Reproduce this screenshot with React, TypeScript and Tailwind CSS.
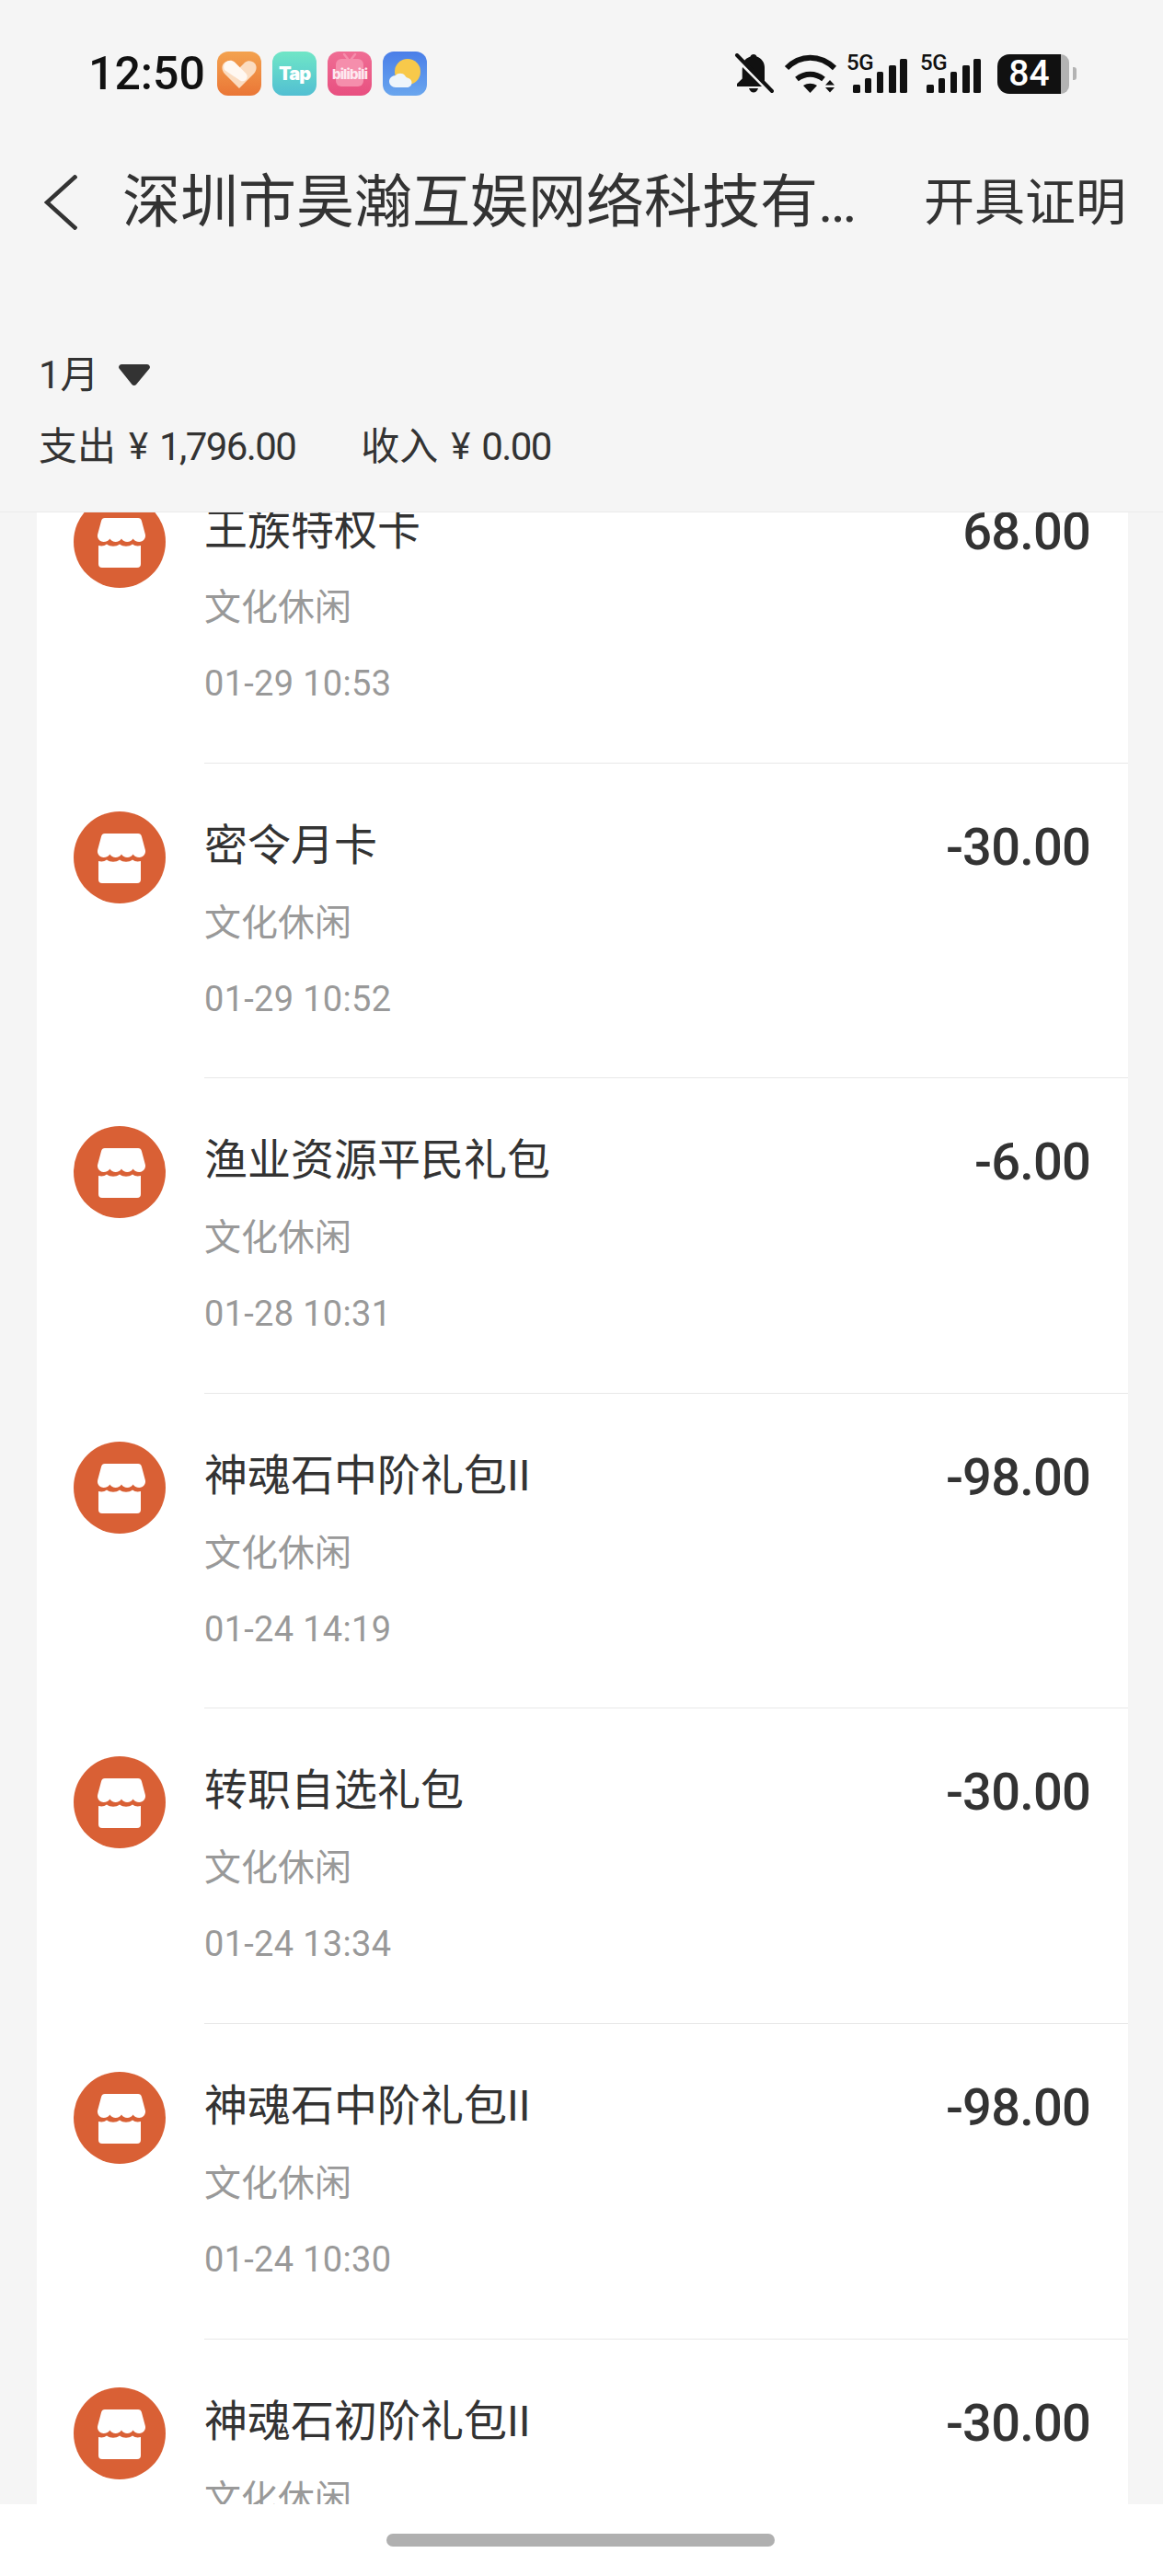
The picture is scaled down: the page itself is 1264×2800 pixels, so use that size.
const font = { cjk: "font-['Roboto','Noto_Sans_CJK_SC',sans-serif]" }

type Bill = { title: string; amount: string; date: string }

const bills: Bill[] = [
  { title: '王族特权卡', amount: '68.00', date: '01-29 10:53' },
  { title: '密令月卡', amount: '-30.00', date: '01-29 10:52' },
  { title: '渔业资源平民礼包', amount: '-6.00', date: '01-28 10:31' },
  { title: '神魂石中阶礼包II', amount: '-98.00', date: '01-24 14:19' },
  { title: '转职自选礼包', amount: '-30.00', date: '01-24 13:34' },
  { title: '神魂石中阶礼包II', amount: '-98.00', date: '01-24 10:30' },
  { title: '神魂石初阶礼包II', amount: '-30.00', date: '01-24 10:28' },
]

function StoreIcon() {
  return (
    <svg viewBox="0 0 100 100" className="h-[100px] w-[100px] shrink-0">
      <circle cx="50" cy="50" r="50" fill="#d96035" />
      <path
        fill="#fff"
        d="M30 24h40a4 4 0 0 1 3.900 3l4 15c.8 4-2.200 8-6.600 8-3 0-5.400-1.500-6.700-3.500-1.300 2-3.600 3.500-6.300 3.500s-5-1.500-6.300-3.500c-1.300 2-3.600 3.500-6.300 3.500s-5-1.500-6.300-3.500c-1.300 2-3.700 3.500-6.700 3.500-4.400 0-7.400-4-6.600-8l4-15a4 4 0 0 1 3.900-3z"
      />
      <path
        fill="#fff"
        d="M27 54c3.500 1 6.500.5 9-1.500 4 3 10 3 14 0 4 3 10 3 14 0 2.500 2 5.500 2.500 9 1.500v20a4 4 0 0 1-4 4H31a4 4 0 0 1-4-4z"
      />
    </svg>
  )
}

function BillRow({ bill, last }: { bill: Bill; last: boolean }) {
  return (
    <div className="flex h-[342.6px] shrink-0 pl-[40px]">
      <div className="pt-[52px]">
        <StoreIcon />
      </div>
      <div className={`ml-[42px] flex flex-1 justify-between pr-[41px] ${last ? '' : 'border-b border-[#e8e8e8]'}`}>
        <div>
          <div className="mt-[59px] text-[47px] leading-[60px] text-[#333333]">{bill.title}</div>
          <div className="mt-[27px] text-[40px] leading-[56px] text-[#999999]">文化休闲</div>
          <div className="mt-[26px] text-[38px] leading-[56px] tracking-[0.3px] text-[#999999]">{bill.date}</div>
        </div>
        <div className="mt-[57px] text-[56px] font-medium leading-[68px] tracking-[-0.8px] text-[#333333]">{bill.amount}</div>
      </div>
    </div>
  )
}

function AppIcons() {
  return (
    <div className="ml-[16px] flex gap-[12px]">
      <div className="h-[48px] w-[48px] overflow-hidden rounded-[12px] bg-gradient-to-b from-[#f3a24f] to-[#ea7636]">
        <svg viewBox="0 0 48 48" className="h-[48px] w-[48px]">
          <path
            fill="#fbdcc0"
            d="M24 40 8 24c-3-3.500-3.500-8-1-11 3-3.500 8-3.500 11-1l6 6 6-6c3-2.500 8-2.500 11 1 2.500 3 2 7.500-1 11z"
          />
          <path fill="#fff8f2" d="M9 12c3-3 7-3 10-.5l12 12c2.500 2.500 2 5.500 0 7.500-2.500 2-5.500 1.500-7.500-.5L8 20c-1.500-2.500-1-6 1-8z" />
        </svg>
      </div>
      <div className="flex h-[48px] w-[48px] items-center justify-center rounded-[12px] bg-gradient-to-b from-[#70e6c6] to-[#52bfd2]">
        <span className="font-['Inter',sans-serif] text-[20px] font-black tracking-[-1px] text-white">Tap</span>
      </div>
      <div className="h-[48px] w-[48px] overflow-hidden rounded-[12px] bg-gradient-to-b from-[#ef6d94] to-[#e84f80]">
        <svg viewBox="0 0 48 48" className="h-[48px] w-[48px]">
          <path d="M18 3l4 5M30 3l-4 5" stroke="#f58eac" strokeWidth="2.500" strokeLinecap="round" />
          <rect x="9" y="8" width="30" height="30" rx="6" fill="#f58eac" />
          <text x="24" y="30" textAnchor="middle" fontSize="15" fontWeight="800" letterSpacing="-0.8" fill="#fde8ef" fontFamily="Inter, sans-serif">
            bilibili
          </text>
        </svg>
      </div>
      <div className="h-[48px] w-[48px] overflow-hidden rounded-[12px] bg-gradient-to-b from-[#4a7ee8] to-[#6aa6ee]">
        <svg viewBox="0 0 48 48" className="h-[48px] w-[48px]">
          <circle cx="27" cy="22" r="14" fill="#f8c94a" />
          <path
            fill="#eef5fb"
            d="M14 39c-4 0-7-3-7-6.500S10 26 14 26c2-3 8-3 10 0 1 1.500 2 2.500 4 3 2 .5 3.500 2.500 3.500 5s-2 5-5 5z"
          />
        </svg>
      </div>
    </div>
  )
}

function SignalIcon() {
  return (
    <svg viewBox="0 0 66 44" className="h-[44px] w-[66px]" fill="#111111">
      <text x="0" y="18" fontSize="24" fontWeight="500" letterSpacing="-0.5" fontFamily="Roboto, sans-serif">5G</text>
      <rect x="7" y="34" width="8" height="9" rx="1.500" />
      <rect x="20" y="27" width="7" height="16" rx="1.500" />
      <rect x="33" y="20" width="7" height="23" rx="1.500" />
      <rect x="46" y="13" width="8" height="30" rx="1.500" />
      <rect x="58" y="6" width="8" height="37" rx="1.500" />
    </svg>
  )
}

function StatusIcons() {
  return (
    <div className="flex items-center">
      <svg viewBox="0 0 44 44" className="h-[44px] w-[44px]" fill="#111111">
        <path d="M22 1c-2 0-3 1-3.500 2.500C15.500 4.500 13 6.500 12 8l22 24V15c0-5-3.500-10-8.500-11.500C25 2 24 1 22 1z" />
        <path d="M10 15c-.2 1-.3 2-.3 3v9.500L4 33v3h27z" />
        <path d="M17 38h10c-1 3-3 4.500-5 4.500s-4-1.500-5-4.500z" />
        <path d="M4 2 42 41" stroke="#111111" strokeWidth="4" strokeLinecap="round" />
      </svg>
      <svg viewBox="0 0 58 44" className="ml-[11px] h-[44px] w-[58px]" fill="none" stroke="#111111" strokeWidth="6">
        <path d="M3 16C18 1 39 1 55 16" />
        <path d="M14 28c9-7 20-7 29 0" />
        <path fill="#111111" stroke="none" d="M21 35c5-3 10-3 15 0l-7.500 8z" />
        <path fill="#111111" stroke="none" d="M50 29l5 5.500H45zM45 37h10l-5 5.500z" />
      </svg>
      <div className="ml-[10px] flex gap-[14px]">
        <SignalIcon />
        <SignalIcon />
      </div>
      <div className="ml-[18px] flex items-center">
        <div className="flex h-[43px] w-[69px] items-center justify-center rounded-l-[13px] bg-[#111111] font-['Roboto',sans-serif] text-[39px] font-medium leading-none text-white">
          84
        </div>
        <div className="h-[43px] w-[9px] rounded-r-[10px] bg-[#b3b3b3]" />
        <div className="ml-[4px] h-[14px] w-[4px] rounded-r-[3px] bg-[#b3b3b3]" />
      </div>
    </div>
  )
}

function Summary({ label, value }: { label: string; value: string }) {
  return (
    <div className="flex items-center">
      <span className="text-[42px] leading-[56px]">{label}</span>
      <span className="ml-[14px] text-[40px] leading-[56px]">¥</span>
      <span className="ml-[12px] text-[42px] leading-[56px] tracking-[-1.6px]">{value}</span>
    </div>
  )
}

export default function App() {
  return (
    <div className={`flex h-[2800px] w-[1264px] flex-col overflow-hidden bg-[#f5f5f5] ${font.cjk}`}>
      <header className="h-[557px] shrink-0 border-b border-[#ebebeb]">
        <div className="mt-[56px] flex h-[48px] items-center justify-between pl-[96px] pr-[94px]">
          <div className="flex items-center">
            <span className="w-[124px] text-[50px] font-medium leading-none text-[#111111]">12:50</span>
            <AppIcons />
          </div>
          <StatusIcons />
        </div>
        <div className="mt-[78px] flex items-center pl-[48px] pr-[40px]">
          <svg viewBox="0 0 36 60" className="h-[60px] w-[36px] shrink-0" fill="none" stroke="#333333" strokeWidth="4.500">
            <path d="M35 1 3 30l32 29" />
          </svg>
          <div className="ml-[49px] w-[800px] truncate text-[63px] leading-[76px] text-[#333333]">
            深圳市昊瀚互娱网络科技有限公司
          </div>
          <div className="ml-auto text-[55px] leading-[76px] text-[#333333]">开具证明</div>
        </div>
        <div className="mt-[122px] pl-[42px] text-[#333333]">
          <div className="flex items-center">
            <span className="text-[42px] leading-[56px]">1月</span>
            <svg viewBox="0 0 34 24" className="ml-[21px] h-[24px] w-[34px]" fill="#333333">
              <path d="M3 0h28a3 3 0 0 1 2.300 4.800L19 22a3 3 0 0 1-4.500 0L.7 4.800A3 3 0 0 1 3 0z" />
            </svg>
          </div>
          <div className="mt-[22px] flex gap-[71px]">
            <Summary label="支出" value="1,796.00" />
            <Summary label="收入" value="0.00" />
          </div>
        </div>
      </header>
      <main className="ml-[40px] mr-[38px] flex-1 overflow-hidden bg-white">
        <div className="-mt-[70px]">
          {bills.map((bill, i) => (
            <BillRow key={i} bill={bill} last={i === bills.length - 1} />
          ))}
        </div>
      </main>
      <footer className="flex h-[78px] shrink-0 justify-center bg-white pr-[2px] pt-[32px]">
        <div className="h-[14px] w-[422px] rounded-full bg-[#b0b0b0]" />
      </footer>
    </div>
  )
}
